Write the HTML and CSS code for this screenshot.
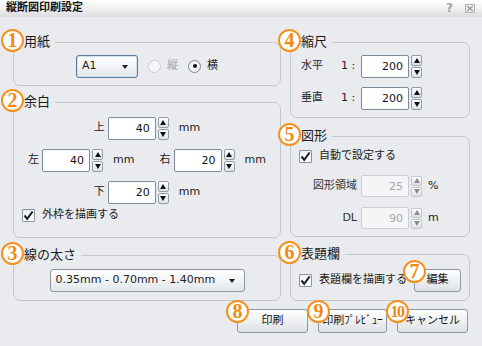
FILE: index.html
```html
<!DOCTYPE html>
<html lang="ja">
<head>
    <meta charset="UTF-8">
    <meta name="viewport" content="width=device-width, initial-scale=1.0">
    <title>縦断図印刷設定</title>
    <link rel="stylesheet" href="styles.css">
</head>
<body>
    <header class="titlebar">
        <span class="title">縦断図印刷設定</span>
        <span class="tools">
            <span class="help">?</span>
            <svg class="close" width="10" height="9" viewBox="0 0 10 9"><rect x="0.5" y="0.5" width="9" height="8" fill="none" stroke="#b4b4b4"/><path d="M2 2 L8 7 M8 2 L2 7" stroke="#9c9c9c" stroke-width="1.4"/></svg>
        </span>
    </header>
    <main class="main">
        <div class="columns">
            <div class="col">
                <fieldset class="group paper">
                    <legend><span class="badge">1</span>用紙</legend>
                    <div class="paper-row">
                        <div class="select a1"><span>A1</span></div>
                        <label class="radio off"><span class="rd"></span>縦</label>
                        <label class="radio"><span class="rd on"></span>横</label>
                    </div>
                </fieldset>
                <fieldset class="group margins">
                    <legend><span class="badge">2</span>余白</legend>
                    <div class="margin-rows">
                        <div class="mrow">
                            <div class="unit"><span class="lbl">上</span><input class="num" value="40"><span class="spin"><i class="up"></i><i class="down"></i></span><span class="mm">mm</span></div>
                        </div>
                        <div class="mrow">
                            <div class="unit"><span class="lbl">左</span><input class="num" value="40"><span class="spin"><i class="up"></i><i class="down"></i></span><span class="mm">mm</span></div>
                            <div class="unit"><span class="lbl">右</span><input class="num" value="20"><span class="spin"><i class="up"></i><i class="down"></i></span><span class="mm">mm</span></div>
                        </div>
                        <div class="mrow">
                            <div class="unit"><span class="lbl">下</span><input class="num" value="20"><span class="spin"><i class="up"></i><i class="down"></i></span><span class="mm">mm</span></div>
                        </div>
                    </div>
                    <label class="check-row frame"><span class="cb"><svg width="11" height="11" viewBox="0 0 11 11"><path d="M1.5 5.5 L4.2 8.8 L9.6 1.5" fill="none" stroke="#1b1b1b" stroke-width="2"/></svg></span>外枠を描画する</label>
                </fieldset>
                <fieldset class="group weight">
                    <legend><span class="badge">3</span>線の太さ</legend>
                    <div class="select lines"><span>0.35mm - 0.70mm - 1.40mm</span></div>
                </fieldset>
            </div>
            <div class="col">
                <fieldset class="group scale">
                    <legend><span class="badge">4</span>縮尺</legend>
                    <div class="scale-rows">
                        <div class="srow"><span class="slbl">水平</span><span class="ratio">1 :</span><input class="num" value="200"><span class="spin"><i class="up"></i><i class="down"></i></span></div>
                        <div class="srow"><span class="slbl">垂直</span><span class="ratio">1 :</span><input class="num" value="200"><span class="spin"><i class="up"></i><i class="down"></i></span></div>
                    </div>
                </fieldset>
                <fieldset class="group shape">
                    <legend><span class="badge">5</span>図形</legend>
                    <label class="check-row"><span class="cb"><svg width="11" height="11" viewBox="0 0 11 11"><path d="M1.5 5.5 L4.2 8.8 L9.6 1.5" fill="none" stroke="#1b1b1b" stroke-width="2"/></svg></span>自動で設定する</label>
                    <div class="shape-rows">
                        <div class="frow"><span class="flbl">図形領域</span><input class="num" value="25" disabled><span class="spin off"><i class="up"></i><i class="down"></i></span><span class="unit-txt">%</span></div>
                        <div class="frow"><span class="flbl">DL</span><input class="num" value="90" disabled><span class="spin off"><i class="up"></i><i class="down"></i></span><span class="unit-txt">m</span></div>
                    </div>
                </fieldset>
                <fieldset class="group titlebox">
                    <legend><span class="badge">6</span>表題欄</legend>
                    <div class="title-row">
                        <label class="check-row"><span class="cb"><svg width="11" height="11" viewBox="0 0 11 11"><path d="M1.5 5.5 L4.2 8.8 L9.6 1.5" fill="none" stroke="#1b1b1b" stroke-width="2"/></svg></span>表題欄を描画する</label>
                        <button class="btn edit" type="button"><span class="badge">7</span>編集</button>
                    </div>
                </fieldset>
            </div>
        </div>
        <div class="actions">
            <button class="btn print" type="button"><span class="badge">8</span>印刷</button>
            <button class="btn preview" type="button"><span class="badge">9</span>印刷ﾌﾟﾚﾋﾞｭｰ</button>
            <button class="btn cancel" type="button"><span class="badge ten">10</span>キャンセル</button>
        </div>
    </main>
</body>
</html>
```

FILE: styles.css
```css
* {
    box-sizing: border-box;
}
body {
    margin: 0;
    width: 482px;
    height: 346px;
    overflow: hidden;
    background: #e9ebee;
    font: 11px/1.3 "DejaVu Sans", "Noto Sans CJK JP", sans-serif;
    color: #222;
}
.titlebar {
    height: 17px;
    display: flex;
    align-items: center;
    padding: 0 6px;
    background: linear-gradient(#ffffff, #f2f2f2 45%, #dbdcde);
}
.title {
    font-weight: bold;
    color: #111;
}
.tools {
    margin-left: auto;
    display: flex;
    align-items: center;
    gap: 12px;
    padding-right: 1px;
}
.help {
    font-weight: bold;
    font-size: 12px;
    color: #a2a2a2;
}
.main {
    padding: 16px 12px 0 13px;
}
.columns {
    display: grid;
    grid-template-columns: 268px 180px;
    column-gap: 9px;
    align-items: start;
}
.col {
    display: flex;
    flex-flow: column;
}

/* groups */
.group {
    margin: 0;
    min-width: 0;
    padding: 0 10px;
    border: 1px solid #c3c8ce;
    border-radius: 7px;
}
.group legend {
    position: relative;
    padding: 0 5px 0 0;
    font-size: 13px;
    line-height: 18px;
    color: #1a1a1a;
}
.paper {
    padding-top: 4px;
    padding-bottom: 7px;
}
.margins {
    margin-top: 7px;
    padding-top: 6px;
    padding-bottom: 14px;
}
.weight {
    margin-top: 8px;
    padding-top: 5px;
    padding-bottom: 8px;
}
.scale {
    padding-top: 4px;
    padding-bottom: 7px;
}
.shape {
    margin-top: 9px;
    padding-top: 3px;
    padding-bottom: 7px;
}
.titlebox {
    margin-top: 8px;
    padding-top: 6px;
    padding-bottom: 8px;
    padding-right: 8px;
}

/* badges */
.badge {
    position: absolute;
    left: -23px;
    top: -4px;
    width: 23px;
    height: 23px;
    border: 2px solid #f5921e;
    border-radius: 50%;
    background: #fff;
    color: #f28a12;
    font: bold 20px/19px "Liberation Serif", serif;
    text-align: center;
}
.badge.ten {
    font-size: 16px;
    letter-spacing: -1.5px;
    text-indent: -1px;
}
.btn .badge {
    left: -12px;
    top: -10px;
}

/* controls */
.select {
    display: flex;
    align-items: center;
    justify-content: space-between;
    height: 23px;
    padding: 0 9px 0 5px;
    border: 1px solid #8b96a1;
    border-radius: 3px;
    background: linear-gradient(#fefefe, #f2f4f6 50%, #e2e6ea);
}
.select::after {
    content: "";
    border-left: 3.5px solid transparent;
    border-right: 3.5px solid transparent;
    border-top: 4px solid #222;
}
.a1 {
    width: 62px;
    border-color: #56799a;
    box-shadow: inset 0 0 0 1px #cfe2f1;
}
.lines {
    width: 195px;
    margin: 0 auto;
}
.paper-row {
    display: flex;
    justify-content: center;
    align-items: center;
    gap: 10px;
}
.radio {
    display: flex;
    align-items: center;
    gap: 6px;
}
.radio.off {
    color: #a4a4a4;
}
.rd {
    width: 13px;
    height: 13px;
    border: 1px solid #7f8a95;
    border-radius: 50%;
    background: radial-gradient(#ffffff, #e4e7ea);
    display: grid;
    place-items: center;
}
.off .rd {
    border-color: #c8cdd2;
    background: #f5f6f7;
}
.rd.on::after {
    content: "";
    width: 4px;
    height: 4px;
    border-radius: 50%;
    background: #111;
}
.num {
    width: 48px;
    height: 23px;
    margin: 0;
    padding: 0 5px;
    border: 1px solid #7d8b99;
    border-radius: 2px;
    background: #fff;
    font: inherit;
    color: #111;
    text-align: right;
}
.num:disabled {
    height: 22px;
    border-color: #cacfd4;
    background: #f4f5f6;
    color: #a8a8a8;
}
.spin {
    display: flex;
    flex-flow: column;
    gap: 1px;
    margin-left: 2px;
}
.spin i {
    width: 11px;
    height: 11px;
    display: flex;
    align-items: center;
    justify-content: center;
    border: 1px solid #939da7;
    border-radius: 2px;
    background: linear-gradient(#ffffff, #dde1e5);
}
.spin i::before {
    content: "";
    border-left: 3px solid transparent;
    border-right: 3px solid transparent;
}
.spin .up::before {
    border-bottom: 5px solid #111;
}
.spin .down::before {
    border-top: 5px solid #111;
}
.spin.off i {
    height: 10px;
    border-color: #c3c9cf;
}
.spin.off .up::before {
    border-bottom-color: #8d8d8d;
}
.spin.off .down::before {
    border-top-color: #8d8d8d;
}
.cb {
    width: 13px;
    height: 13px;
    display: grid;
    place-items: center;
    border: 1px solid #8a949e;
    border-radius: 1px;
    background: linear-gradient(#eef0f2, #ffffff);
}
.check-row {
    display: flex;
    align-items: center;
    gap: 7px;
    height: 16px;
    margin-left: -2px;
}
.btn {
    position: relative;
    height: 24px;
    padding: 0;
    border: 1px solid #8e98a2;
    border-radius: 3px;
    background: linear-gradient(#fefefe, #eef0f2 50%, #dde1e6);
    font: inherit;
    color: #111;
}

/* margins group */
.margin-rows {
    display: flex;
    flex-flow: column;
    gap: 9px;
}
.mrow {
    display: flex;
    justify-content: center;
    align-items: center;
    gap: 25px;
    height: 23px;
}
.unit {
    display: flex;
    align-items: center;
}
.lbl {
    margin-right: 3px;
}
.mm {
    margin-left: 10px;
}
.frame {
    margin-top: 3px;
}

/* scale group */
.scale-rows {
    display: flex;
    flex-flow: column;
    gap: 9px;
}
.srow {
    display: flex;
    align-items: center;
    height: 23px;
}
.slbl {
    width: 40px;
}
.ratio {
    width: 20px;
}

/* shape group */
.shape-rows {
    display: flex;
    flex-flow: column;
    gap: 10px;
    margin-top: 11px;
}
.frow {
    display: flex;
    align-items: center;
    height: 22px;
}
.flbl {
    width: 56px;
    margin-right: 4px;
    text-align: right;
    color: #333;
}
.unit-txt {
    margin-left: 6px;
}

/* title group */
.title-row {
    display: flex;
    align-items: center;
    height: 23px;
}
.edit {
    margin-left: auto;
    width: 47px;
    height: 23px;
}

/* bottom buttons */
.actions {
    display: flex;
    justify-content: flex-end;
    gap: 10px;
    margin-top: 8px;
    padding-right: 2px;
}
.print,
.cancel {
    width: 71px;
}
.preview {
    width: 69px;
}
```
